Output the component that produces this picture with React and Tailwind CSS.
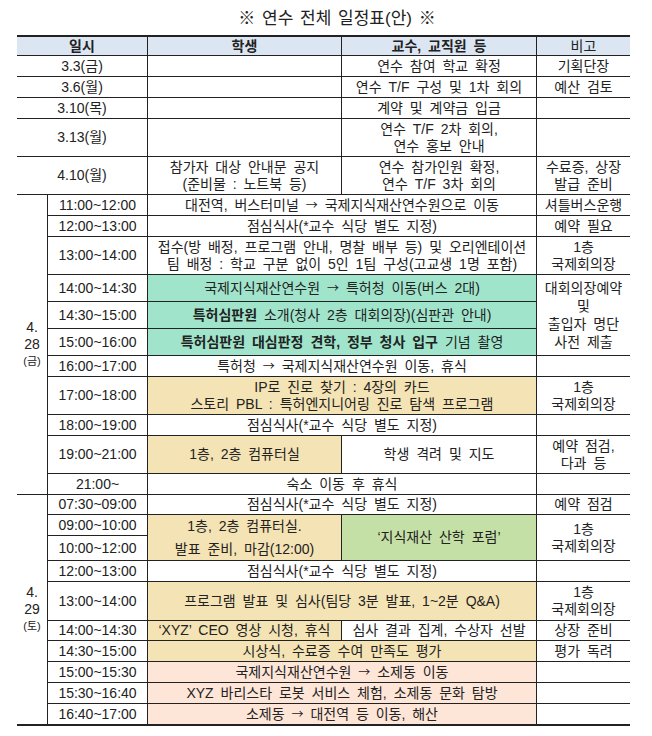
const base =
  "flex flex-col items-center justify-center text-center border-b border-[#222] overflow-hidden";

function C({ at, bg = "", lead = "leading-[17px]", last = false, children }) {
  return (
    <div className={`${base} ${last ? "" : "border-r"} ${at} ${bg} ${lead}`}>
      {children}
    </div>
  );
}

// arrow glyph drawn from the CJK font, wider and heavier like the source
const Arr = () => <span className="font-['Noto_Sans_CJK_KR',sans-serif] text-[12px]">→</span>;

const mint = "bg-[#a0e5cb]";
const tan = "bg-[#f4e3b4]";
const leaf = "bg-[#c5e0a6]";
const peach = "bg-[#fde5d8]";
const head = "bg-[#dce6f2]";

export default function App() {
  return (
    <div className="w-[652px] h-[736px] bg-white text-[#222] font-['Liberation_Sans','Noto_Sans_CJK_KR',sans-serif] text-[14px] [word-spacing:3px]">
      <div className="h-[35px] pt-[3px] pl-[22px] flex items-center justify-center text-[17px] [word-spacing:2px]">
        ※ 연수 전체 일정표(안) ※
      </div>

      <div className="ml-[17px] w-[613px] border-t-2 border-b border-[#222] grid grid-cols-[31px_100px_194px_195px_93px] grid-rows-[19px_21px_21px_21px_38px_38px_21px_21px_38px_27px_27px_27px_21px_38px_21px_38px_21px_20px_21px_25px_21px_39px_20px_21px_21px_21px_21px]">
        {/* header */}
        <C at="col-start-1 col-span-2 row-start-1" bg={head}><b>일시</b></C>
        <C at="col-start-3 row-start-1" bg={head}><b>학생</b></C>
        <C at="col-start-4 row-start-1" bg={head}><b>교수, 교직원 등</b></C>
        <C at="col-start-5 row-start-1" bg={head} last>비고</C>

        {/* before the event */}
        <C at="col-start-1 col-span-2 row-start-2">3.3(금)</C>
        <C at="col-start-3 row-start-2" />
        <C at="col-start-4 row-start-2">연수 참여 학교 확정</C>
        <C at="col-start-5 row-start-2" last>기획단장</C>

        <C at="col-start-1 col-span-2 row-start-3">3.6(월)</C>
        <C at="col-start-3 row-start-3" />
        <C at="col-start-4 row-start-3">연수 T/F 구성 및 1차 회의</C>
        <C at="col-start-5 row-start-3" last>예산 검토</C>

        <C at="col-start-1 col-span-2 row-start-4">3.10(목)</C>
        <C at="col-start-3 row-start-4" />
        <C at="col-start-4 row-start-4">계약 및 계약금 입금</C>
        <C at="col-start-5 row-start-4" last />

        <C at="col-start-1 col-span-2 row-start-5">3.13(월)</C>
        <C at="col-start-3 row-start-5" />
        <C at="col-start-4 row-start-5">
          <span>연수 T/F 2차 회의,</span>
          <span>연수 홍보 안내</span>
        </C>
        <C at="col-start-5 row-start-5" last />

        <C at="col-start-1 col-span-2 row-start-6">4.10(월)</C>
        <C at="col-start-3 row-start-6">
          <span>참가자 대상 안내문 공지</span>
          <span>(준비물 : 노트북 등)</span>
        </C>
        <C at="col-start-4 row-start-6">
          <span>연수 참가인원 확정,</span>
          <span>연수 T/F 3차 회의</span>
        </C>
        <C at="col-start-5 row-start-6" last>
          <span>수료증, 상장</span>
          <span>발급 준비</span>
        </C>

        {/* 4.28 */}
        <C at="col-start-1 row-start-7 row-span-11">
          <span>4.</span>
          <span>28</span>
          <span className="text-[11px]">(금)</span>
        </C>

        <C at="col-start-2 row-start-7">11:00~12:00</C>
        <C at="col-start-3 col-span-2 row-start-7">
          <span>대전역, 버스터미널 <Arr /> 국제지식재산연수원으로 이동</span>
        </C>
        <C at="col-start-5 row-start-7" last>셔틀버스운행</C>

        <C at="col-start-2 row-start-8">12:00~13:00</C>
        <C at="col-start-3 col-span-2 row-start-8">점심식사(*교수 식당 별도 지정)</C>
        <C at="col-start-5 row-start-8" last>예약 필요</C>

        <C at="col-start-2 row-start-9">13:00~14:00</C>
        <C at="col-start-3 col-span-2 row-start-9">
          <span>접수(방 배정, 프로그램 안내, 명찰 배부 등) 및 오리엔테이션</span>
          <span>팀 배정 : 학교 구분 없이 5인 1팀 구성(고교생 1명 포함)</span>
        </C>
        <C at="col-start-5 row-start-9" last>
          <span>1층</span>
          <span>국제회의장</span>
        </C>

        <C at="col-start-2 row-start-10">14:00~14:30</C>
        <C at="col-start-3 col-span-2 row-start-10" bg={mint}>
          <span>국제지식재산연수원 <Arr /> 특허청 이동(버스 2대)</span>
        </C>
        <C at="col-start-5 row-start-10 row-span-3" lead="leading-[18px]" last>
          <span>대회의장예약</span>
          <span>및</span>
          <span>출입자 명단</span>
          <span>사전 제출</span>
        </C>

        <C at="col-start-2 row-start-11">14:30~15:00</C>
        <C at="col-start-3 col-span-2 row-start-11" bg={mint}>
          <span><b>특허심판원</b> 소개(청사 2층 대회의장)(심판관 안내)</span>
        </C>

        <C at="col-start-2 row-start-12">15:00~16:00</C>
        <C at="col-start-3 col-span-2 row-start-12" bg={mint}>
          <span><b>특허심판원 대심판정 견학, 정부 청사 입구</b> 기념 촬영</span>
        </C>

        <C at="col-start-2 row-start-13">16:00~17:00</C>
        <C at="col-start-3 col-span-2 row-start-13">
          <span>특허청 <Arr /> 국제지식재산연수원 이동, 휴식</span>
        </C>
        <C at="col-start-5 row-start-13" last />

        <C at="col-start-2 row-start-14">17:00~18:00</C>
        <C at="col-start-3 col-span-2 row-start-14" bg={tan}>
          <span>IP로 진로 찾기 : 4장의 카드</span>
          <span>스토리 PBL : 특허엔지니어링 진로 탐색 프로그램</span>
        </C>
        <C at="col-start-5 row-start-14" last>
          <span>1층</span>
          <span>국제회의장</span>
        </C>

        <C at="col-start-2 row-start-15">18:00~19:00</C>
        <C at="col-start-3 col-span-2 row-start-15">점심식사(*교수 식당 별도 지정)</C>
        <C at="col-start-5 row-start-15" last />

        <C at="col-start-2 row-start-16">19:00~21:00</C>
        <C at="col-start-3 row-start-16" bg={tan}>1층, 2층 컴퓨터실</C>
        <C at="col-start-4 row-start-16">학생 격려 및 지도</C>
        <C at="col-start-5 row-start-16" last>
          <span>예약 점검,</span>
          <span>다과 등</span>
        </C>

        <C at="col-start-2 row-start-17">21:00~</C>
        <C at="col-start-3 col-span-2 row-start-17">숙소 이동 후 휴식</C>
        <C at="col-start-5 row-start-17" last />

        {/* 4.29 */}
        <C at="col-start-1 row-start-18 row-span-10">
          <span>4.</span>
          <span>29</span>
          <span className="text-[11px]">(토)</span>
        </C>

        <C at="col-start-2 row-start-18">07:30~09:00</C>
        <C at="col-start-3 col-span-2 row-start-18">점심식사(*교수 식당 별도 지정)</C>
        <C at="col-start-5 row-start-18" last>예약 점검</C>

        <C at="col-start-2 row-start-19">09:00~10:00</C>
        <C at="col-start-2 row-start-20">10:00~12:00</C>
        <C at="col-start-3 row-start-19 row-span-2" bg={tan} lead="leading-[23px]">
          <span>1층, 2층 컴퓨터실.</span>
          <span>발표 준비, 마감(12:00)</span>
        </C>
        <C at="col-start-4 row-start-19 row-span-2" bg={leaf}>‘지식재산 산학 포럼’</C>
        <C at="col-start-5 row-start-19 row-span-2" last>
          <span>1층</span>
          <span>국제회의장</span>
        </C>

        <C at="col-start-2 row-start-21">12:00~13:00</C>
        <C at="col-start-3 col-span-2 row-start-21">점심식사(*교수 식당 별도 지정)</C>
        <C at="col-start-5 row-start-21" last />

        <C at="col-start-2 row-start-22">13:00~14:00</C>
        <C at="col-start-3 col-span-2 row-start-22" bg={tan}>프로그램 발표 및 심사(팀당 3분 발표, 1~2분 Q&amp;A)</C>
        <C at="col-start-5 row-start-22" last>
          <span>1층</span>
          <span>국제회의장</span>
        </C>

        <C at="col-start-2 row-start-23">14:00~14:30</C>
        <C at="col-start-3 row-start-23" bg={tan}>‘XYZ’ CEO 영상 시청, 휴식</C>
        <C at="col-start-4 row-start-23">심사 결과 집계, 수상자 선발</C>
        <C at="col-start-5 row-start-23" last>상장 준비</C>

        <C at="col-start-2 row-start-24">14:30~15:00</C>
        <C at="col-start-3 col-span-2 row-start-24" bg={tan}>시상식, 수료증 수여 만족도 평가</C>
        <C at="col-start-5 row-start-24" last>평가 독려</C>

        <C at="col-start-2 row-start-25">15:00~15:30</C>
        <C at="col-start-3 col-span-2 row-start-25" bg={peach}>
          <span>국제지식재산연수원 <Arr /> 소제동 이동</span>
        </C>
        <C at="col-start-5 row-start-25" last />

        <C at="col-start-2 row-start-26">15:30~16:40</C>
        <C at="col-start-3 col-span-2 row-start-26" bg={peach}>XYZ 바리스타 로봇 서비스 체험, 소제동 문화 탐방</C>
        <C at="col-start-5 row-start-26" last />

        <C at="col-start-2 row-start-27">16:40~17:00</C>
        <C at="col-start-3 col-span-2 row-start-27" bg={peach}>
          <span>소제동 <Arr /> 대전역 등 이동, 해산</span>
        </C>
        <C at="col-start-5 row-start-27" last />
      </div>
    </div>
  );
}
